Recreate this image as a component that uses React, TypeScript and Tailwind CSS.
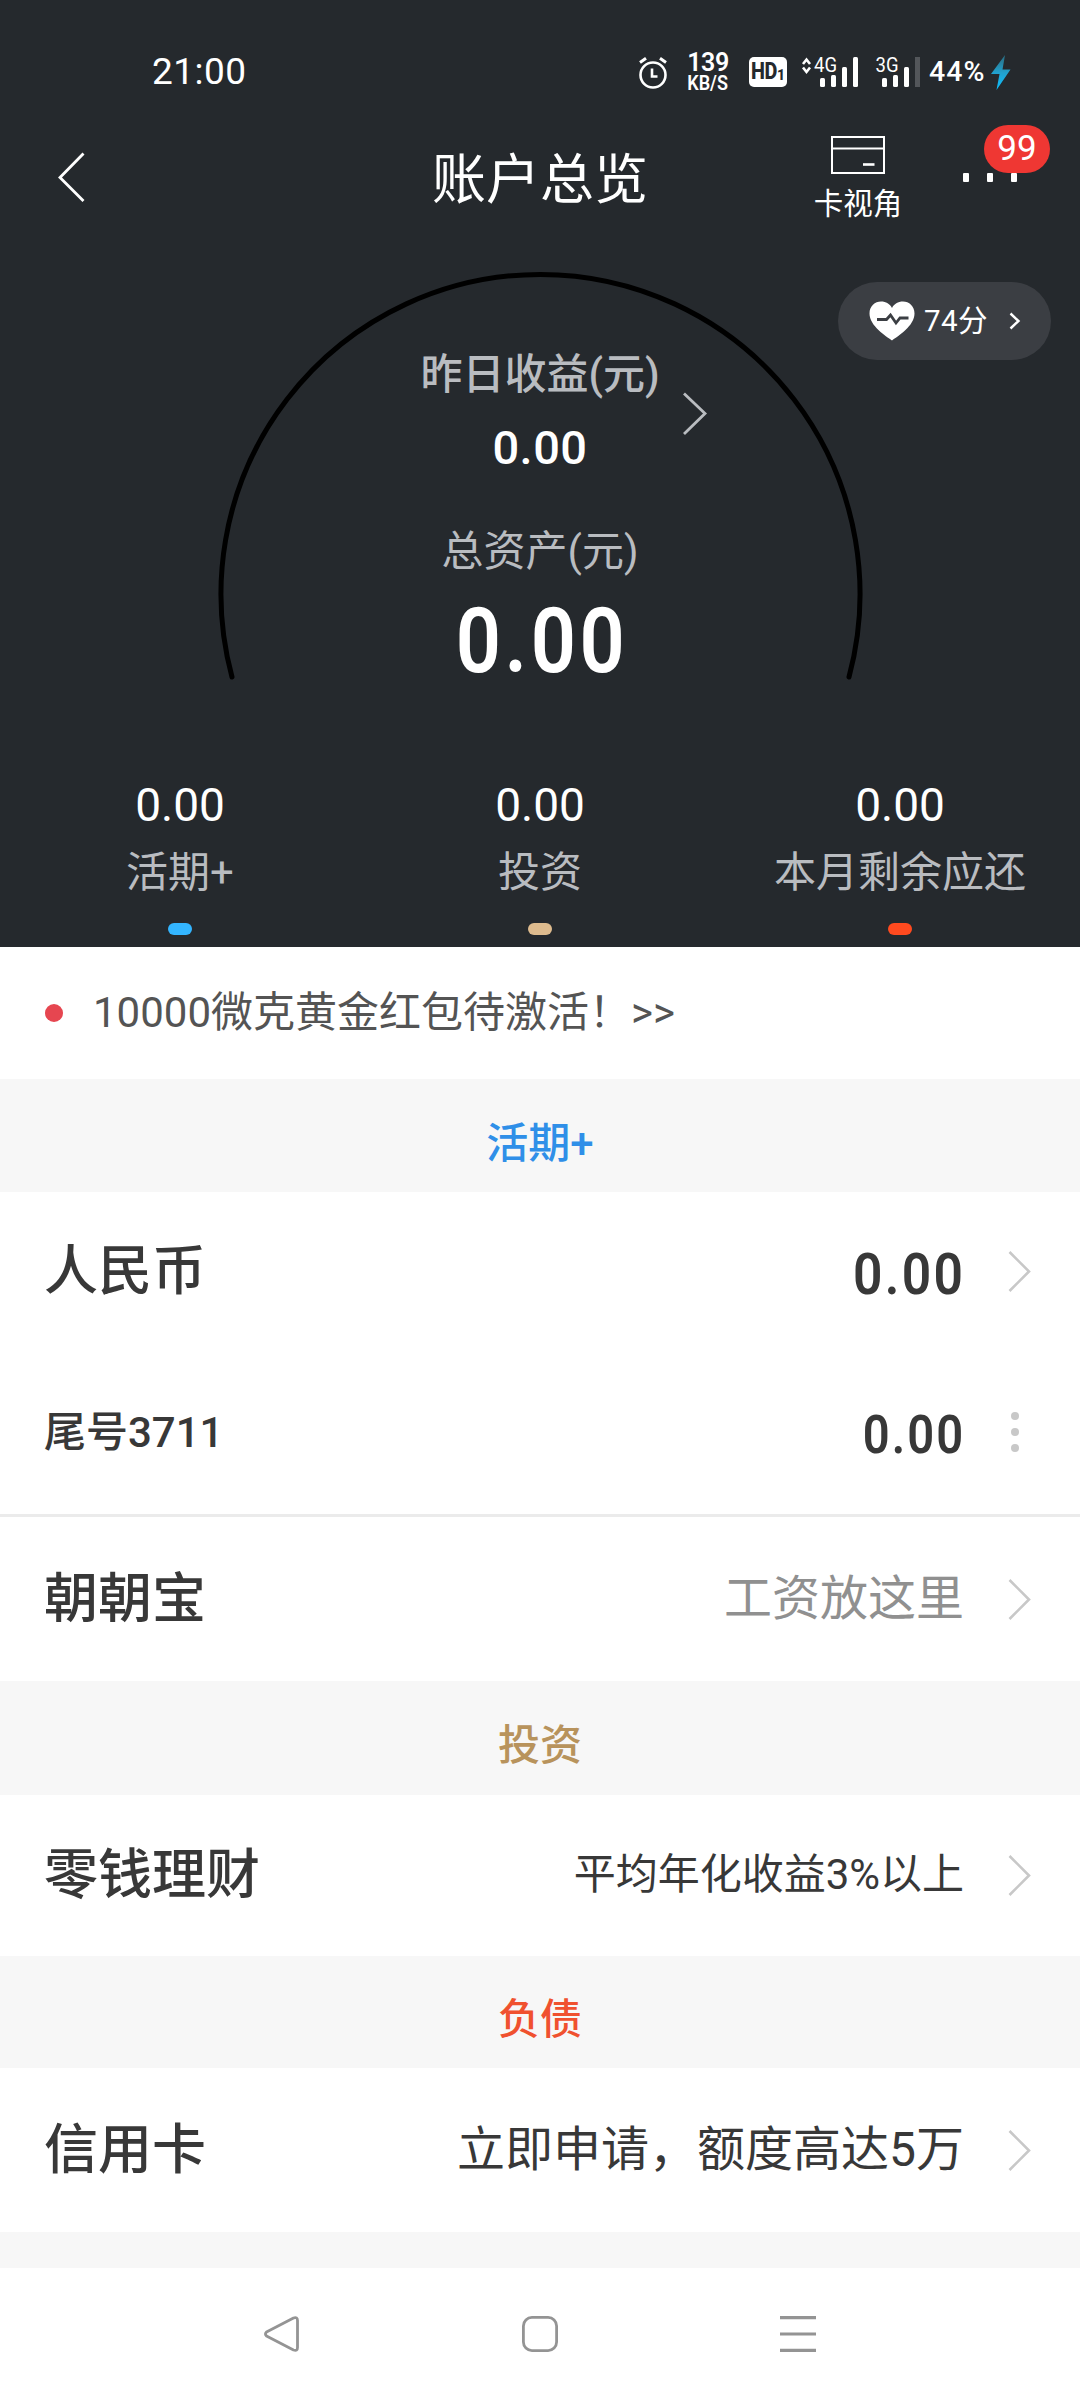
import type { ReactNode } from "react";

const stats = [
  { value: "0.00", label: "活期+", dot: "bg-[#33b5ff]" },
  { value: "0.00", label: "投资", dot: "bg-[#debb8e]" },
  { value: "0.00", label: "本月剩余应还", dot: "bg-[#ff4a1f]" },
];

function StatusBar() {
  return (
    <div className="flex h-[110px] items-start pt-[50px] pl-[152px] text-white">
      <span className="mt-[3px] w-[487px] text-[37px] leading-[38px] tracking-[0.5px]">21:00</span>

      {/* alarm */}
      <svg className="mt-[6px] h-[33px] w-[28px]" viewBox="0 0 28 33" fill="none" stroke="#fff">
        <circle cx="14" cy="19" r="12.5" strokeWidth="2.6" />
        <path d="M13 12.5v8h5.5" strokeWidth="2.6" />
        <path d="M1 6.5l6-4.3M27 6.5l-6-4.3" strokeWidth="3" />
      </svg>

      <div className="ml-[18px] flex w-[46px] flex-col items-center">
        <span className="text-[25px] leading-[26px] font-semibold tracking-[-0.5px]">139</span>
        <span className="-mt-[2px] scale-x-[0.9] text-[20px] leading-[18px] font-semibold">KB/S</span>
      </div>

      <div className="mt-[7px] ml-[18px] flex h-[30px] w-[38px] items-center justify-center rounded-[5px] bg-white text-[#25292d]">
        <span className="-mx-[2px] scale-x-[0.86] text-[23px] leading-[30px] font-extrabold tracking-[-0.5px]">HD</span>
        <span className="mt-[5px] text-[14px] leading-[20px] font-extrabold">1</span>
      </div>

      <svg className="mt-[5px] ml-[15px] h-[34px] w-[58px] overflow-visible" viewBox="0 0 58 34" fill="#fff">
        <path d="M1 9l3.5-4.5L8 9M1 12.5l3.5 4.5L8 12.5" fill="none" stroke="#fff" strokeWidth="2.6" />
        <text x="12" y="17" fontSize="21" textLength="23" lengthAdjust="spacingAndGlyphs">4G</text>
        <rect x="18" y="23" width="5" height="9" rx="1.5" />
        <rect x="29" y="20" width="5" height="12" rx="1.5" />
        <rect x="40" y="12" width="5" height="20" rx="1.5" />
        <rect x="51" y="2" width="5" height="30" rx="1.5" />
      </svg>

      <svg className="mt-[5px] ml-[15px] h-[34px] w-[48px] overflow-visible" viewBox="0 0 48 34" fill="#fff">
        <text x="0.5" y="17" fontSize="21" textLength="23" lengthAdjust="spacingAndGlyphs">3G</text>
        <rect x="7" y="23" width="5" height="9" rx="1.5" />
        <rect x="18" y="20" width="5" height="12" rx="1.5" />
        <rect x="29" y="12" width="5" height="20" rx="1.5" />
        <rect x="40" y="2" width="5" height="30" fill="#53565a" />
      </svg>

      <span className="mt-[6px] ml-[6px] w-[62px] text-[28.5px] leading-[32px] font-medium tracking-[1px]">44%</span>
      <svg className="mt-[5px] h-[36px] w-[20px]" viewBox="0 0 20 36">
        <defs>
          <linearGradient id="bolt" x1="0" y1="0" x2="0" y2="1">
            <stop offset="0" stopColor="#2a6b80" />
            <stop offset="0.5" stopColor="#22a0cc" />
            <stop offset="1" stopColor="#0cc0ff" />
          </linearGradient>
        </defs>
        <path d="M14 0L0 19h8.5L5.5 35L19.5 14.5H11.5z" fill="url(#bolt)" />
      </svg>
    </div>
  );
}

function TitleBar() {
  return (
    <div className="relative flex h-[140px] items-center px-[58px]">
      <svg className="mb-[6px] h-[50px] w-[28px]" viewBox="0 0 28 50" fill="none" stroke="#fff" strokeWidth="2.8">
        <path d="M25.5 1.5L2 25.5L25.5 49" />
      </svg>
      <h1 className="flex-1 pt-[1px] pl-[346px] text-[54px] leading-[60px] text-white">账户总览</h1>
      <div className="mr-[60px] flex w-[90px] flex-col items-center text-white">
        <svg className="h-[38px] w-[54px]" viewBox="0 0 54 38" fill="none" stroke="#fff" strokeWidth="2">
          <rect x="1" y="1" width="52" height="36" />
          <path d="M1 12.5h52" />
          <path d="M32 28.5h11.5" strokeWidth="2.6" />
        </svg>
        <span className="mt-[10px] text-[29.5px] leading-[40px]">卡视角</span>
      </div>
      <div className="mr-[5px] flex w-[54px] justify-between">
        <i className="mb-[5px] h-[9px] w-[6px] rounded-[1px] bg-white" />
        <i className="h-[9px] w-[6px] rounded-[1px] bg-white" />
        <i className="h-[9px] w-[6px] rounded-[1px] bg-white" />
      </div>
      <span className="absolute top-[15px] right-[30px] flex h-[48px] w-[66px] items-center justify-center rounded-[24px] bg-[#ef3733] text-[35px] leading-[48px] text-white">
        99
      </span>
    </div>
  );
}

function Gauge() {
  return (
    <div className="relative flex h-[520px] flex-col items-center">
      {/* dial */}
      <svg className="absolute top-0 left-0 h-[450px] w-[1080px]" viewBox="0 250 1080 450" fill="none">
        <path
          d="M232 677A319.5 319.5 0 1 1 849 677"
          stroke="#000"
          strokeWidth="5"
          strokeLinecap="round"
        />
        <path d="M684 393.5L705 413.5L684 434" stroke="#b9bcc0" strokeWidth="2.8" />
      </svg>

      {/* health score */}
      <div className="absolute top-[32px] right-[29px] flex h-[78px] w-[213px] items-center rounded-full bg-[#3b3e43] pl-[31px] text-white">
        <svg className="h-[40px] w-[46px]" viewBox="0 0 46 40">
          <path
            d="M23 39.5C17 35 0.5 25 0.5 12.5C0.5 5 6 0.5 12 0.5C17 0.5 21 3 23 7C25 3 29 0.5 34 0.5C40 0.5 45.5 5 45.5 12.5C45.5 25 29 35 23 39.5z"
            fill="#fff"
          />
          <path d="M8 18.5h9.5l4-4.5l5.5 8l4-5h8.5" fill="none" stroke="#3b3e43" strokeWidth="2.8" />
        </svg>
        <span className="ml-[9px] text-[29.5px] leading-[40px] tracking-[0.4px]">74分</span>
        <svg className="ml-[21px] h-[18px] w-[12px]" viewBox="0 0 12 18" fill="none" stroke="#fff" strokeWidth="2.4">
          <path d="M1.5 1.5L9.5 9L1.5 16.5" />
        </svg>
      </div>

      <p className="mt-[95px] text-[42px] leading-[60px] font-medium text-[#b9bcc0]">昨日收益(元)</p>
      <p className="mt-[13px] text-[47px] leading-[60px] font-medium tracking-[0.5px] text-white">0.00</p>
      <p className="mt-[44px] text-[42px] leading-[60px] text-[#b9bcc0]">总资产(元)</p>
      <p className="mt-[10px] ml-[4px] scale-x-[0.88] text-[90px] leading-[100px] font-semibold tracking-[0.045em] text-white">
        0.00
      </p>
    </div>
  );
}

function SectionTitle({ className, children }: { className: string; children: ReactNode }) {
  return (
    <div className={`flex shrink-0 items-center justify-center bg-[#f7f7f7] pt-[15px] text-[42px] font-medium ${className}`}>
      {children}
    </div>
  );
}

// condensed balance figures
function Amount({ className, children }: { className: string; children: ReactNode }) {
  return (
    <span className={`-mr-[1px] origin-right scale-x-[0.89] pt-[7px] font-semibold tracking-[0.045em] ${className}`}>
      {children}
    </span>
  );
}

function Chevron() {
  return (
    <svg className="ml-[44px] h-[41px] w-[24px]" viewBox="0 0 24 41" fill="none" stroke="#c8c8c8" strokeWidth="2.6">
      <path d="M1.5 1L21 20.5L1.5 40" />
    </svg>
  );
}

function Row({ label, className, children }: { label: string; className: string; children: ReactNode }) {
  return (
    <div className={`flex shrink-0 items-center bg-white pr-[48px] pl-[44px] text-[#383838] ${className}`}>
      <span className="flex-1 text-[54px] font-medium">{label}</span>
      {children}
      <Chevron />
    </div>
  );
}

export default function App() {
  return (
    <div className="flex h-[2400px] w-[1080px] flex-col overflow-hidden bg-white font-['Roboto','Noto_Sans_CJK_SC',sans-serif]">
      <header className="h-[947px] shrink-0 bg-[#25292d]">
        <StatusBar />
        <TitleBar />
        <Gauge />
        <div className="grid grid-cols-3">
          {stats.map((item) => (
            <div key={item.label} className="flex flex-col items-center">
              <span className="mt-[5px] text-[46px] leading-[60px] text-white">{item.value}</span>
              <span className="mt-[8px] text-[42px] leading-[60px] text-[#b9bcc0]">{item.label}</span>
              <i className={`mt-[20px] h-[12px] w-[24px] rounded-full ${item.dot}`} />
            </div>
          ))}
        </div>
      </header>

      <div className="flex h-[132px] shrink-0 items-center pl-[45px]">
        <i className="h-[18px] w-[18px] rounded-full bg-[#e64650]" />
        <span className="ml-[30px] pb-[2px] text-[42px] text-[#545454]">10000微克黄金红包待激活！&gt;&gt;</span>
      </div>

      <SectionTitle className="h-[113px] text-[#2f8fe8]">活期+</SectionTitle>
      <Row label="人民币" className="h-[158px]">
        <Amount className="text-[58px]">0.00</Amount>
      </Row>
      <div className="flex h-[167px] shrink-0 items-center border-b-[3px] border-[#ebebeb] pr-[61px] pl-[44px] font-medium text-[#383838]">
        <span className="flex-1 text-[42px]">尾号3711</span>
        <Amount className="text-[53px]">0.00</Amount>
        <div className="ml-[47px] flex flex-col gap-[8px]">
          <i className="h-[8px] w-[8px] rounded-full bg-[#c8c8c8]" />
          <i className="h-[8px] w-[8px] rounded-full bg-[#c8c8c8]" />
          <i className="h-[8px] w-[8px] rounded-full bg-[#c8c8c8]" />
        </div>
      </div>
      <Row label="朝朝宝" className="h-[164px]">
        <span className="text-[48px] text-[#909090]">工资放这里</span>
      </Row>

      <SectionTitle className="h-[114px] text-[#b8935c]">投资</SectionTitle>
      <Row label="零钱理财" className="h-[161px]">
        <span className="pb-[2px] text-[42px]">平均年化收益3%以上</span>
      </Row>

      <SectionTitle className="h-[112px] text-[#f0512f]">负债</SectionTitle>
      <Row label="信用卡" className="h-[164px]">
        <span className="text-[48px]">立即申请，额度高达5万</span>
      </Row>
      <div className="h-[36px] shrink-0 bg-[#f7f7f7]" />

      {/* system navigation */}
      <nav className="flex h-[132px] shrink-0 items-center justify-between pr-[264px] pl-[264px]">
        <svg className="h-[36px] w-[36px]" viewBox="0 0 36 36" fill="none" stroke="#949494" strokeWidth="2.8">
          <path d="M2.5 16Q0.5 18 2.5 20L29.5 34Q33.5 35.5 33.5 31.5V4.5Q33.5 0.5 29.5 2z" strokeLinejoin="round" />
        </svg>
        <svg className="h-[36px] w-[36px]" viewBox="0 0 36 36" fill="none" stroke="#949494" strokeWidth="2.8">
          <rect x="1.4" y="1.4" width="33.2" height="33.2" rx="8.5" />
        </svg>
        <svg className="h-[36px] w-[36px]" viewBox="0 0 36 36" fill="none" stroke="#949494" strokeWidth="3.2">
          <path d="M0 1.6h36M0 18h36M0 34.4h36" />
        </svg>
      </nav>
    </div>
  );
}
